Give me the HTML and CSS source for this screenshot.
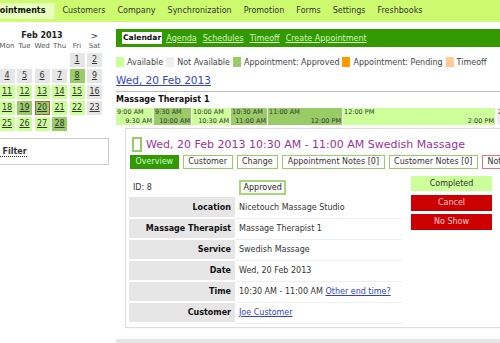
FILE: index.html
```html
<!DOCTYPE html>
<html lang="en">
<head>
    <meta charset="UTF-8">
    <title>Appointments</title>
    <link rel="stylesheet" href="styles.css">
</head>
<body>
<div class="page">
    <ul class="topnav">
        <li class="active"><a href="javascript:;">Appointments</a></li>
        <li><a href="javascript:;">Customers</a></li>
        <li><a href="javascript:;">Company</a></li>
        <li><a href="javascript:;">Synchronization</a></li>
        <li><a href="javascript:;">Promotion</a></li>
        <li><a href="javascript:;">Forms</a></li>
        <li><a href="javascript:;">Settings</a></li>
        <li><a href="javascript:;">Freshbooks</a></li>
    </ul>

    <div class="layout">
        <!-- 左侧日历 -->
        <div class="sidebar">
            <div class="cal-head">
                <a class="cal-nav" href="javascript:;">&lt;</a>
                <span class="cal-month">Feb 2013</span>
                <a class="cal-nav" href="javascript:;">&gt;</a>
            </div>
            <div class="cal-grid">
                <span class="dow">Sun</span><span class="dow">Mon</span><span class="dow">Tue</span><span class="dow">Wed</span><span class="dow">Thu</span><span class="dow">Fri</span><span class="dow">Sat</span>

                <span></span><span></span><span></span><span></span><span></span>
                <a class="day na" href="javascript:;">1</a><a class="day na" href="javascript:;">2</a>

                <a class="day na" href="javascript:;">3</a><a class="day na" href="javascript:;">4</a><a class="day na" href="javascript:;">5</a><a class="day na" href="javascript:;">6</a><a class="day na" href="javascript:;">7</a><a class="day booked" href="javascript:;">8</a><a class="day na" href="javascript:;">9</a>

                <a class="day na" href="javascript:;">10</a><a class="day free" href="javascript:;">11</a><a class="day free" href="javascript:;">12</a><a class="day free" href="javascript:;">13</a><a class="day free" href="javascript:;">14</a><a class="day free" href="javascript:;">15</a><a class="day na" href="javascript:;">16</a>

                <a class="day na" href="javascript:;">17</a><a class="day free" href="javascript:;">18</a><a class="day booked" href="javascript:;">19</a><a class="day booked today" href="javascript:;">20</a><a class="day free" href="javascript:;">21</a><a class="day free" href="javascript:;">22</a><a class="day na" href="javascript:;">23</a>

                <a class="day na" href="javascript:;">24</a><a class="day free" href="javascript:;">25</a><a class="day free" href="javascript:;">26</a><a class="day free" href="javascript:;">27</a><a class="day booked" href="javascript:;">28</a>
            </div>
            <div class="filter"><a href="javascript:;">Global Filter</a></div>
        </div>

        <div class="main">
            <div class="tabbar">
                <span class="tab-current">Calendar</span>
                <a href="javascript:;">Agenda</a>
                <a href="javascript:;">Schedules</a>
                <a href="javascript:;">Timeoff</a>
                <a href="javascript:;">Create Appointment</a>
            </div>

            <div class="legend">
                <span class="legend-item"><i class="swatch free"></i>Available</span>
                <span class="legend-item"><i class="swatch na"></i>Not Available</span>
                <span class="legend-item"><i class="swatch booked"></i>Appointment: Approved</span>
                <span class="legend-item"><i class="swatch pending"></i>Appointment: Pending</span>
                <span class="legend-item"><i class="swatch timeoff"></i>Timeoff</span>
            </div>

            <a class="day-link" href="javascript:;">Wed, 20 Feb 2013</a>
            <div class="rule"></div>

            <div class="resource">Massage Therapist 1</div>
            <div class="timeline">
                <div class="slot free" style="width:37px"><span>9:00 AM</span><span class="end">9:30 AM</span></div>
                <div class="slot booked" style="width:37px"><span>9:30 AM</span><span class="end">10:00 AM</span></div>
                <div class="slot free" style="width:38px"><span>10:00 AM</span><span class="end">10:30 AM</span></div>
                <div class="slot booked" style="width:36px"><span>10:30 AM</span><span class="end">11:00 AM</span></div>
                <div class="slot booked" style="width:74px"><span>11:00 AM</span><span class="end">12:00 PM</span></div>
                <div class="slot free" style="width:152px"><span>12:00 PM</span><span class="end">2:00 PM</span></div>
                <div class="slot na" style="width:60px"><span>2:00 PM</span><span class="end">5:00 PM</span></div>
            </div>

            <!-- 预约详情 -->
            <div class="appt">
                <div class="appt-title">
                    <i class="appt-mark"></i>
                    <span>Wed, 20 Feb 2013 10:30 AM - 11:00 AM Swedish Massage</span>
                </div>
                <div class="appt-tabs">
                    <a class="current" href="javascript:;">Overview</a>
                    <a href="javascript:;">Customer</a>
                    <a href="javascript:;">Change</a>
                    <a href="javascript:;">Appointment Notes [0]</a>
                    <a href="javascript:;">Customer Notes [0]</a>
                    <a class="warn" href="javascript:;">Notify Customer</a>
                </div>
                <div class="appt-body">
                    <table class="details">
                        <tr class="id-row">
                            <td>ID: 8</td>
                            <td><span class="status">Approved</span></td>
                        </tr>
                        <tr><th>Location</th><td>Nicetouch Massage Studio</td></tr>
                        <tr><th>Massage Therapist</th><td>Massage Therapist 1</td></tr>
                        <tr><th>Service</th><td>Swedish Massage</td></tr>
                        <tr><th>Date</th><td>Wed, 20 Feb 2013</td></tr>
                        <tr><th>Time</th><td>10:30 AM - 11:00 AM <a href="javascript:;">Other end time?</a></td></tr>
                        <tr><th>Customer</th><td><a href="javascript:;">Joe Customer</a></td></tr>
                    </table>
                    <div class="actions">
                        <a class="btn done" href="javascript:;">Completed</a>
                        <a class="btn red" href="javascript:;">Cancel</a>
                        <a class="btn red" href="javascript:;">No Show</a>
                    </div>
                </div>
            </div>

            <div class="bottom-bar"></div>
        </div>
    </div>
</div>
</body>
</html>
```

FILE: styles.css
```css
* {
    margin: 0;
    padding: 0;
    box-sizing: border-box;
}
html,
body {
    overflow: hidden;
}
body {
    width: 500px;
    height: 343px;
    font-family: "DejaVu Sans", Verdana, sans-serif;
    font-size: 8px;
    color: #333;
    background: #fff;
}
a {
    color: inherit;
}
.page {
    width: 640px;
    margin-left: -18px;
}

/* top menu */
.topnav {
    list-style: none;
    display: flex;
    height: 22px;
    padding-top: 3px;
    background: #cdfb6f;
}
.topnav li {
    margin-right: 2px;
}
.topnav a {
    display: block;
    height: 16px;
    line-height: 16px;
    padding: 0 5px;
    text-decoration: none;
    color: #333;
}
.topnav .active {
    margin-left: -5px;
}
.topnav .active a {
    padding-right: 10px;
    background: #e8ffbc;
    font-weight: bold;
    color: #111;
}

.layout {
    display: flex;
    gap: 6px;
}

/* sidebar calendar */
.sidebar {
    width: 128px;
    flex-shrink: 0;
}
.cal-head {
    width: 120px;
    display: flex;
    justify-content: space-between;
    margin-top: 8px;
    padding: 0 4px;
    height: 12px;
    line-height: 12px;
}
.cal-month {
    font-weight: bold;
    color: #222;
}
.cal-nav {
    font-size: 9px;
    text-decoration: none;
    color: #333;
}
.cal-grid {
    display: grid;
    grid-template-columns: repeat(7, 15px);
    grid-template-rows: 9px;
    grid-auto-rows: 14px;
    column-gap: 2.5px;
    row-gap: 2px;
}
.dow {
    font-size: 7px;
    line-height: 9px;
    text-align: center;
    color: #555;
}
.day {
    line-height: 14px;
    text-align: center;
    color: #333;
}
.day.na {
    background: #e6e6e6;
}
.day.free {
    background: #ccff99;
}
.day.booked {
    background: #99cc66;
}
.day.today {
    border: 1px solid #996633;
    line-height: 12px;
}
.filter {
    margin: 7px 1px 0 -40px;
    height: 27px;
    line-height: 25px;
    padding-left: 28px;
    border: 1px solid #ccc;
}
.filter a {
    font-weight: bold;
    text-decoration: none;
    border-bottom: 1px dotted #333;
}

/* main column */
.main {
    width: 460px;
    flex-shrink: 0;
}
.tabbar {
    display: flex;
    align-items: center;
    gap: 6px;
    margin-top: 7px;
    height: 18px;
    padding: 0 6px;
    background: #339900;
}
.tabbar a {
    color: #d6f5c4;
}
.tab-current {
    height: 12px;
    line-height: 12px;
    padding: 0 1px;
    margin-right: -2px;
    background: #fff;
    font-size: 7.6px;
    font-weight: bold;
    color: #111;
}
.legend {
    display: flex;
    align-items: center;
    gap: 3px;
    margin-top: 10px;
    height: 10px;
    color: #444;
}
.legend-item {
    display: flex;
    align-items: center;
    gap: 3px;
}
.swatch {
    width: 8px;
    height: 10px;
}
.swatch.free {
    background: #ccff99;
}
.swatch.na {
    background: #eeeeee;
}
.swatch.booked {
    background: #99cc66;
}
.swatch.pending {
    background: #ff9900;
}
.swatch.timeoff {
    background: #ffcc99;
}
.day-link {
    display: inline-block;
    margin-top: 7px;
    font-size: 10.5px;
    line-height: 13px;
    color: #3344cc;
}
.rule {
    margin-top: 4px;
    border-top: 1px solid #bbb;
}
.resource {
    margin-top: 3px;
    line-height: 10px;
    font-weight: bold;
    color: #111;
}
.timeline {
    display: flex;
    gap: 1px;
    margin-top: 3px;
    height: 17px;
}
.slot {
    flex-shrink: 0;
    display: flex;
    flex-direction: column;
    justify-content: space-between;
    padding: 1px 1px 0;
    font-size: 6.5px;
    line-height: 7.5px;
    color: #333;
    white-space: nowrap;
    overflow: hidden;
}
.slot .end {
    text-align: right;
}
.slot.free {
    background: #ccff99;
}
.slot.booked {
    background: #99cc66;
}
.slot.na {
    background: #eeeeee;
    margin-left: 1px;
}

/* appointment panel */
.appt {
    width: 430px;
    margin: 3px 0 0 9px;
    padding: 7px 0 3px 4px;
    border: 1px solid #ddd;
    box-shadow: 0 0 2px #eee;
}
.appt-title {
    display: flex;
    align-items: center;
    gap: 4px;
    height: 17px;
    font-size: 11px;
    color: #993399;
}
.appt-mark {
    width: 10px;
    height: 15px;
    margin-left: 2px;
    border: 2px solid #99cc66;
}
.appt-tabs {
    display: flex;
    gap: 4px;
    margin-top: 2px;
    white-space: nowrap;
}
.appt-tabs a {
    height: 14px;
    line-height: 12px;
    padding: 0 4.5px;
    border: 1px solid #99cc66;
    text-decoration: none;
    color: #333;
}
.appt-tabs a.current {
    background: #339900;
    border-color: #339900;
    color: #ccffcc;
}
.appt-tabs a.warn {
    border-color: #dd7777;
}
.appt-body {
    display: flex;
    gap: 9px;
    margin-top: 7px;
}
.details {
    width: 273px;
    margin: 2px 0 0 -1px;
    border-collapse: collapse;
}
.details th,
.details td {
    height: 21px;
    padding: 0 4px;
    white-space: nowrap;
}
.details th {
    width: 106px;
    text-align: right;
    background: #e6e6e6;
    border-bottom: 2px solid #fff;
    color: #111;
}
.details td {
    text-align: left;
    border-bottom: 1px solid #eee;
}
.details td a {
    color: #3344cc;
}
.details .id-row td {
    height: 19px;
    border-bottom: none;
}
.status {
    display: inline-block;
    height: 15px;
    line-height: 11px;
    padding: 0 2.5px;
    border: 2px solid #a6d678;
    color: #222;
}
.actions {
    width: 81px;
    display: flex;
    flex-direction: column;
    gap: 3.5px;
}
.btn {
    display: block;
    height: 15px;
    line-height: 15px;
    text-align: center;
    text-decoration: none;
}
.btn.done {
    background: #ccff99;
    color: #333;
}
.btn.red {
    height: 16px;
    line-height: 16px;
    background: #cc0000;
    color: #ffcccc;
}
.bottom-bar {
    margin-top: 11px;
    height: 10px;
    background: #e6e6e6;
}
```
